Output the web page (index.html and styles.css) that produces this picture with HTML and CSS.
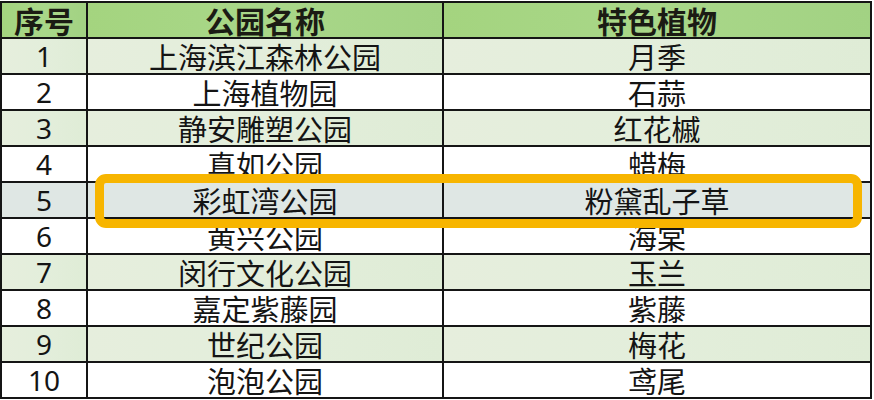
FILE: index.html
```html
<!DOCTYPE html>
<html lang="zh">
<head>
<meta charset="utf-8">
<link rel="stylesheet" href="styles.css">
</head>
<body>
<div class="wrap">
  <table class="parks">
    <colgroup><col class="c1"><col class="c2"><col class="c3"></colgroup>
    <thead>
      <tr><th>序号</th><th>公园名称</th><th>特色植物</th></tr>
    </thead>
    <tbody>
      <tr class="odd"><td>1</td><td>上海滨江森林公园</td><td>月季</td></tr>
      <tr><td>2</td><td>上海植物园</td><td>石蒜</td></tr>
      <tr class="odd"><td>3</td><td>静安雕塑公园</td><td>红花槭</td></tr>
      <tr><td>4</td><td>真如公园</td><td>蜡梅</td></tr>
      <tr class="sel"><td>5</td><td>彩虹湾公园</td><td>粉黛乱子草</td></tr>
      <tr><td>6</td><td>黄兴公园</td><td>海棠</td></tr>
      <tr class="odd"><td>7</td><td>闵行文化公园</td><td>玉兰</td></tr>
      <tr><td>8</td><td>嘉定紫藤园</td><td>紫藤</td></tr>
      <tr class="odd"><td>9</td><td>世纪公园</td><td>梅花</td></tr>
      <tr><td>10</td><td>泡泡公园</td><td>鸢尾</td></tr>
    </tbody>
  </table>
  <div class="mark"></div>
</div>
</body>
</html>
```

FILE: styles.css
```css
html, body {
  margin: 0;
  padding: 0;
  background: #ffffff;
}
.wrap {
  position: relative;
  width: 874px;
  height: 400px;
  padding-top: 1px;
  box-sizing: border-box;
}
.parks {
  border-collapse: collapse;
  width: 870px;
  table-layout: fixed;
  font-family: "Noto Sans CJK SC", "Noto Sans", sans-serif;
  color: #141414;
}
.c1 { width: 86px; }
.c2 { width: 356px; }
.c3 { width: 428px; }
.parks th, .parks td {
  border: 2px solid #151515;
  height: 34px;
  padding: 0;
  text-align: center;
  vertical-align: middle;
  line-height: 34px;
  overflow: hidden;
  white-space: nowrap;
}
.parks th {
  font-size: 30px;
  font-weight: 700;
  background: linear-gradient(90deg, #a4d47f 0%, #a9d789 50%, #a2d283 100%);
  color: #1b1b14;
}
.parks td {
  font-size: 29px;
  font-weight: 400;
  background: #ffffff;
}
.parks tr.odd td {
  background: linear-gradient(90deg, #e6eedd 0%, #e3eedb 50%, #dfecd6 100%);
}
.parks tr.sel td {
  background: #dfe7e4;
}
.parks td:first-child {
  font-family: "Noto Sans", "DejaVu Sans", sans-serif;
  font-size: 28px;
  font-weight: 400;
}
.mark {
  position: absolute;
  left: 95px;
  top: 174px;
  width: 767px;
  height: 54px;
  box-sizing: border-box;
  border: 9px solid #f7b500;
  border-radius: 11px;
}
```
